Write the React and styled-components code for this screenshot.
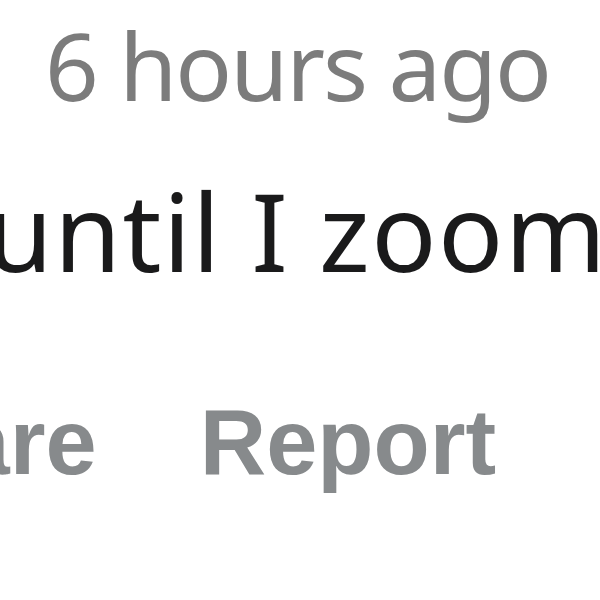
import styled, { createGlobalStyle } from 'styled-components';

const GlobalStyle = createGlobalStyle`
  html, body {
    margin: 0;
    padding: 0;
    background: #ffffff;
  }
`

const Viewport = styled.div`
  width: 600px;
  height: 600px;
  overflow: hidden;
  background: #ffffff;
`

const Comment = styled.div`
  display: flex;
  flex-direction: column;
  white-space: nowrap;
`

const Meta = styled.div`
  font-family: "Noto Sans", "Open Sans", sans-serif;
  font-size: 94px;
  letter-spacing: -2px;
  line-height: 1;
  color: #7c7c7c;
  padding-left: 45px;
  margin-top: 18px;
`

const Body = styled.p`
  font-family: "Noto Sans", "Open Sans", sans-serif;
  font-size: 108px;
  letter-spacing: 1.5px;
  line-height: 1;
  color: #1a1a1b;
  margin: 65px 0 0 -14px;
`

const Actions = styled.div`
  display: flex;
  gap: 103px;
  margin: 111px 0 0 -159px;
`

const ActionButton = styled.button`
  font-family: "Liberation Sans", Arial, sans-serif;
  font-weight: 700;
  font-size: 92px;
  line-height: 1;
  color: #878a8c;
  background: transparent;
  border: 0;
  padding: 0;
  cursor: pointer;
`

export default function App() {
  return (
    <Viewport>
      <GlobalStyle />
      <Comment>
        <Meta>6 hours ago</Meta>
        <Body>until I zoom</Body>
        <Actions>
          <ActionButton>Share</ActionButton>
          <ActionButton>Report</ActionButton>
        </Actions>
      </Comment>
    </Viewport>
  );
}
